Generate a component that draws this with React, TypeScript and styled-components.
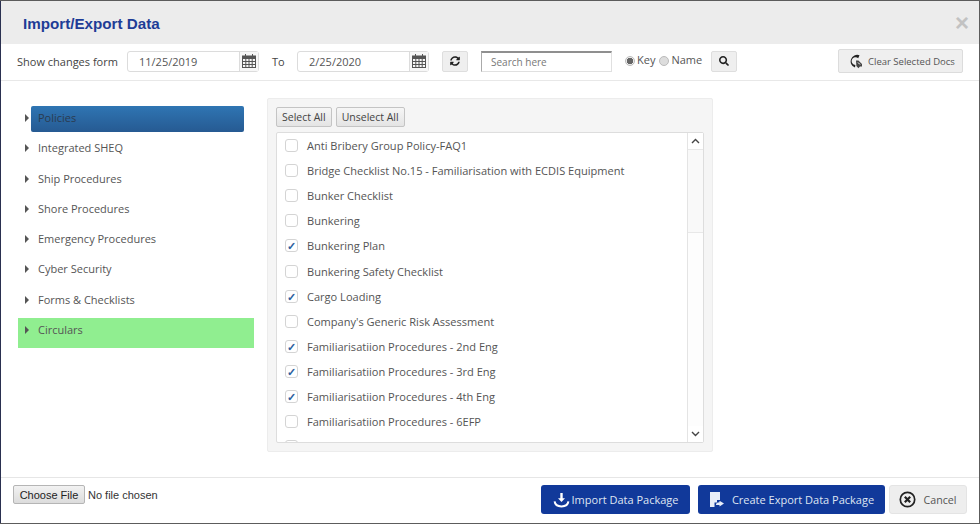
import React from "react";
import styled, { createGlobalStyle } from "styled-components";
import { FaSearch, FaSyncAlt } from "react-icons/fa";

const docs = [
    { name: "Anti Bribery Group Policy-FAQ1", checked: false },
    { name: "Bridge Checklist No.15 - Familiarisation with ECDIS Equipment", checked: false },
    { name: "Bunker Checklist", checked: false },
    { name: "Bunkering", checked: false },
    { name: "Bunkering Plan", checked: true },
    { name: "Bunkering Safety Checklist", checked: false },
    { name: "Cargo Loading", checked: true },
    { name: "Company's Generic Risk Assessment", checked: false },
    { name: "Familiarisatiion Procedures - 2nd Eng", checked: true },
    { name: "Familiarisatiion Procedures - 3rd Eng", checked: true },
    { name: "Familiarisatiion Procedures - 4th Eng", checked: true },
    { name: "Familiarisatiion Procedures - 6EFP", checked: false },
    { name: "", checked: false },
];

const menu = [
    "Policies",
    "Integrated SHEQ",
    "Ship Procedures",
    "Shore Procedures",
    "Emergency Procedures",
    "Cyber Security",
    "Forms & Checklists",
    "Circulars",
];

const CalendarIcon = () => (
    <svg width="14" height="14" viewBox="0 0 14 14" fill="none" stroke="#555" strokeWidth="1">
        <rect x="0.5" y="2.5" width="13" height="11" />
        <rect x="0.5" y="2" width="13" height="2.5" fill="#555" />
        <path d="M3.5 0v3M10.5 0v3M0.5 7.5h13M0.5 10.5h13M3.8 4.5v9M7 4.5v9M10.2 4.5v9" />
    </svg>
);

const ClearIcon = () => (
    <svg width="15" height="15" viewBox="0 0 15 15">
        <path d="M10.5 1.2A6.4 6.4 0 1 0 6 13.6l.4-2.6A3.9 3.9 0 1 1 9.2 4.2z" fill="#222" />
        <path d="M7 6.5h2.4l3.6 3.4v2.6H11l-1.6 1.7L7.4 12z" fill="#444" />
        <path d="M9 8.5l2 2" stroke="#fff" strokeWidth="1" />
    </svg>
);

const ImportIcon = () => (
    <svg width="17" height="16" viewBox="0 0 17 16" fill="none" stroke="#fff">
        <path d="M8.5 1v6.5" strokeWidth="2.4" />
        <path d="M5 6.2h7L8.5 10z" fill="#fff" stroke="none" />
        <path d="M1.6 9.4c.4 3.4 3.2 5 6.9 5s6.5-1.6 6.9-5" strokeWidth="2" />
    </svg>
);

const ExportIcon = () => (
    <svg width="17" height="16" viewBox="0 0 17 16" fill="#e8edf8">
        <path d="M1 0h10v8H8v2.5H5.5V15H1z" />
        <path d="M7 12.5c.3-1.6 1.6-2.3 3.5-2.3V8.8l4.5 2.8-4.5 2.8v-1.5c-1.600 0-2.800 0-3.500.1z" />
    </svg>
);

const CancelIcon = () => (
    <svg width="17" height="17" viewBox="0 0 17 17" fill="none" stroke="#222">
        <circle cx="8.5" cy="8.500" r="7.200" strokeWidth="1.700" />
        <path d="M5.800 5.800l5.400 5.400M11.200 5.800l-5.400 5.400" strokeWidth="2.200" />
    </svg>
);

const App: React.FC = () => {
    return (
        <>
            <GlobalStyle />
            <Modal>
                <Header>
                    <Title>Import/Export Data</Title>
                    <CloseMark>×</CloseMark>
                </Header>
                <Toolbar>
                    <ToolLabel>Show changes form</ToolLabel>
                    <DateBox>
                        <DateValue>11/25/2019</DateValue>
                        <DateAddon><CalendarIcon /></DateAddon>
                    </DateBox>
                    <ToLabel>To</ToLabel>
                    <DateBox>
                        <DateValue>2/25/2020</DateValue>
                        <DateAddon><CalendarIcon /></DateAddon>
                    </DateBox>
                    <IconButton $left={13}><FaSyncAlt size={10} color="#222" /></IconButton>
                    <SearchBox placeholder="Search here" />
                    <RadioGroup>
                        <RadioDot $on />
                        <RadioText>Key</RadioText>
                        <RadioDot />
                        <RadioText>Name</RadioText>
                    </RadioGroup>
                    <IconButton $left={5}><FaSearch size={10} color="#222" /></IconButton>
                    <ClearButton>
                        <ClearIcon />
                        <span>Clear Selected Docs</span>
                    </ClearButton>
                </Toolbar>
                <Body>
                    <Sidebar>
                        {menu.map((item, i) => (
                            <MenuRow key={item} $green={i === menu.length - 1}>
                                <Arrow />
                                <MenuLabel $active={i === 0}>{item}</MenuLabel>
                            </MenuRow>
                        ))}
                    </Sidebar>
                    <Panel>
                        <PanelButtons>
                            <GrayButton>Select All</GrayButton>
                            <GrayButton>Unselect All</GrayButton>
                        </PanelButtons>
                        <ListFrame>
                            <DocList>
                                {docs.map((doc, i) => (
                                    <DocRow key={i}>
                                        <Check $checked={doc.checked}>{doc.checked ? "✓" : ""}</Check>
                                        <span>{doc.name}</span>
                                    </DocRow>
                                ))}
                            </DocList>
                            <Scrollbar>
                                <ScrollEnd>
                                    <svg width="9" height="6" viewBox="0 0 9 6" fill="none" stroke="#444" strokeWidth="1.400"><path d="M1 5l3.500-3.500L8 5" /></svg>
                                </ScrollEnd>
                                <ScrollThumb />
                                <ScrollTrack />
                                <ScrollEnd>
                                    <svg width="9" height="6" viewBox="0 0 9 6" fill="none" stroke="#444" strokeWidth="1.400"><path d="M1 1l3.500 3.500L8 1" /></svg>
                                </ScrollEnd>
                            </Scrollbar>
                        </ListFrame>
                    </Panel>
                </Body>
                <Footer>
                    <FilePicker>
                        <ChooseFile>Choose File</ChooseFile>
                        <NoFile>No file chosen</NoFile>
                    </FilePicker>
                    <FooterActions>
                        <PrimaryButton><ImportIcon />Import Data Package</PrimaryButton>
                        <PrimaryButton $wide><ExportIcon />Create Export Data Package</PrimaryButton>
                        <CancelButton><CancelIcon />Cancel</CancelButton>
                    </FooterActions>
                </Footer>
            </Modal>
        </>
    );
};

export default App;


const GlobalStyle = createGlobalStyle`
    html, body {
        margin: 0;
        padding: 0;
        width: 980px;
        height: 524px;
        overflow: hidden;
        background: #5c5c5c;
    }

    * {
        box-sizing: border-box;
    }
`;

const Modal = styled.div`
    display: flex;
    flex-direction: column;
    width: 978px;
    height: 522px;
    margin: 1px;
    background: #fff;
    font-family: "Open Sans", "Noto Sans", sans-serif;
    font-size: 11px;
    color: #555;
    box-shadow: -1px 0 0 #2a3050;
`;

const Header = styled.div`
    display: flex;
    flex: 0 0 43px;
    align-items: center;
    justify-content: space-between;
    padding: 2px 10px 0 22px;
    background: #ececec;
`;

const Title = styled.div`
    font-family: "Liberation Sans", Arial, sans-serif;
    font-size: 15.200px;
    font-weight: 700;
    color: #1e3c96;
`;

const CloseMark = styled.div`
    margin-bottom: 1px;
    font-family: "Liberation Sans", Arial, sans-serif;
    font-size: 24px;
    font-weight: 700;
    line-height: 20px;
    color: #c2c2c2;
`;

const Toolbar = styled.div`
    display: flex;
    flex: 0 0 37px;
    align-items: center;
    padding: 0 16px 2px 16px;
    border-bottom: 1px solid #e8e8e8;
`;

const ToolLabel = styled.span`
    width: 110px;
    color: #444;
`;

const DateBox = styled.div`
    display: flex;
    width: 132px;
    height: 21px;
    border: 1px solid #dcdcdc;
    border-radius: 3px;
`;

const DateValue = styled.div`
    flex: 1;
    padding-left: 11px;
    font-size: 11px;
    line-height: 19px;
    color: #555;
`;

const DateAddon = styled.div`
    display: flex;
    flex: 0 0 19px;
    align-items: center;
    justify-content: center;
    border-left: 1px solid #dcdcdc;
    background: #f7f7f7;
`;

const ToLabel = styled.span`
    width: 38px;
    padding-left: 13px;
    color: #444;
`;

const IconButton = styled.button<{ $left: number }>`
    display: flex;
    align-items: center;
    justify-content: center;
    width: 26px;
    height: 21px;
    margin-left: ${props => props.$left}px;
    padding: 0;
    border: 1px solid #dedede;
    border-radius: 2px;
    background: #efefef;
`;

const SearchBox = styled.input`
    width: 131px;
    height: 21px;
    margin-left: 13px;
    padding: 0 9px;
    border: 1px solid #e0e0e0;
    border-top: 2px solid #8f8f8f;
    border-left-color: #aaa;
    font-family: inherit;
    font-size: 10px;

    &::placeholder {
        color: #777;
        opacity: 1;
    }
`;

const RadioGroup = styled.div`
    display: flex;
    align-items: center;
    margin-left: 13px;
    color: #555;
`;

const RadioDot = styled.span<{ $on?: boolean }>`
    width: 10px;
    height: 10px;
    margin-right: 2px;
    border: 1px solid #bbb;
    border-radius: 50%;
    background: ${props => (props.$on ? "radial-gradient(circle, #666 0 55%, #eee 60%)" : "#ddd")};
`;

const RadioText = styled.span`
    margin-right: 4px;
    line-height: 14px;
    padding-bottom: 2px;
`;

const ClearButton = styled.button`
    display: flex;
    align-items: center;
    gap: 4px;
    width: 125px;
    height: 24px;
    margin-left: auto;
    padding: 0 0 0 10px;
    border: 1px solid #dcdcdc;
    border-radius: 2px;
    background: #efefef;
    font-family: inherit;
    font-size: 9.500px;
    color: #555;
    white-space: nowrap;
`;

const Body = styled.div`
    display: flex;
    flex: 1;
    min-height: 0;
    padding: 17px 0 0 17px;
`;

const Sidebar = styled.div`
    display: flex;
    flex-direction: column;
    flex: 0 0 236px;
    padding-top: 8px;
`;

const MenuRow = styled.div<{ $green: boolean }>`
    display: flex;
    flex: 0 0 30.250px;
    align-items: flex-start;
    padding-left: 7px;
    background: ${props => (props.$green ? "#90ee90" : "transparent")};
`;

const Arrow = styled.span`
    flex: 0 0 auto;
    width: 0;
    height: 0;
    margin-top: 8px;
    border-top: 4px solid transparent;
    border-bottom: 4px solid transparent;
    border-left: 4px solid #555;
`;

const MenuLabel = styled.div<{ $active: boolean }>`
    flex: 1;
    height: 26px;
    margin: 0 10px 0 2px;
    padding-left: 7px;
    border-radius: 2px;
    font-size: 11px;
    line-height: 24px;
    color: ${props => (props.$active ? "#2a3b4f" : "#555")};
    background: ${props => (props.$active ? "linear-gradient(#2f75b3, #265a92)" : "transparent")};
    white-space: nowrap;
`;

const Panel = styled.div`
    display: flex;
    flex-direction: column;
    width: 446px;
    height: 354px;
    margin-left: 13px;
    padding: 8px 8px 8px;
    border: 1px solid #ececec;
    border-radius: 2px;
    background: #f5f5f5;
`;

const PanelButtons = styled.div`
    display: flex;
    gap: 4px;
    margin-bottom: 5px;
`;

const GrayButton = styled.button`
    height: 20px;
    padding: 0 5px;
    border: 1px solid #c4c4c4;
    border-radius: 2px;
    background: linear-gradient(#f6f6f6, #e4e4e4);
    font-family: inherit;
    font-size: 10.500px;
    color: #444;
`;

const ListFrame = styled.div`
    display: flex;
    flex: 1;
    min-height: 0;
    border: 1px solid #ddd;
    border-radius: 2px;
    background: #fff;
`;

const DocList = styled.div`
    flex: 1;
    overflow: hidden;
`;

const DocRow = styled.div`
    display: flex;
    align-items: center;
    height: 25.100px;
    padding-left: 8px;
    font-size: 11.050px;
    color: #555;
    white-space: nowrap;
`;

const Check = styled.span<{ $checked: boolean }>`
    display: flex;
    flex: 0 0 13px;
    align-items: center;
    justify-content: center;
    height: 13px;
    margin-right: 9px;
    border: 1px solid #d4d4d4;
    border-radius: 3px;
    font-size: 11px;
    font-weight: 700;
    line-height: 1;
    color: #2f5f9e;
`;

const Scrollbar = styled.div`
    display: flex;
    flex-direction: column;
    flex: 0 0 16px;
    border-left: 1px solid #e4e4e4;
    background: #fafafa;
`;

const ScrollEnd = styled.div`
    display: flex;
    flex: 0 0 16px;
    align-items: center;
    justify-content: center;
    background: #fff;
`;

const ScrollThumb = styled.div`
    flex: 0 0 84px;
    border-top: 1px solid #e8e8e8;
    border-bottom: 1px solid #e8e8e8;
    background: #f9f9f9;
`;

const ScrollTrack = styled.div`
    flex: 1;
    background: #fdfdfd;
`;

const Footer = styled.div`
    display: flex;
    flex: 0 0 46px;
    align-items: center;
    padding: 0 12px 2px 12px;
    border-top: 1px solid #e6e6e6;
`;

const FilePicker = styled.div`
    display: flex;
    align-items: center;
    margin-bottom: 10px;
`;

const ChooseFile = styled.button`
    width: 72px;
    height: 19px;
    padding: 0;
    border: 1px solid #b5b5b5;
    border-radius: 2px;
    background: linear-gradient(#f2f2f2, #dcdcdc);
    font-family: "Liberation Sans", Arial, sans-serif;
    font-size: 11px;
    color: #222;
`;

const NoFile = styled.span`
    margin-left: 3px;
    font-family: "Liberation Sans", Arial, sans-serif;
    font-size: 11px;
    color: #333;
`;

const FooterActions = styled.div`
    display: flex;
    align-items: center;
    margin-left: auto;
`;

const PrimaryButton = styled.button<{ $wide?: boolean }>`
    display: flex;
    align-items: center;
    justify-content: center;
    gap: ${props => (props.$wide ? 6 : 2)}px;
    width: ${props => (props.$wide ? 187 : 149)}px;
    height: 29px;
    margin-right: ${props => (props.$wide ? 4 : 8)}px;
    padding: 0;
    border: none;
    border-radius: 3px;
    background: #11399a;
    font-family: inherit;
    font-size: 11px;
    color: #dfe5f2;
`;

const CancelButton = styled.button`
    display: flex;
    align-items: center;
    justify-content: center;
    gap: 7px;
    width: 78px;
    height: 29px;
    padding: 0;
    border: 1px solid #e4e4e4;
    border-radius: 3px;
    background: #eee;
    font-family: inherit;
    font-size: 10.700px;
    color: #555;
`;
